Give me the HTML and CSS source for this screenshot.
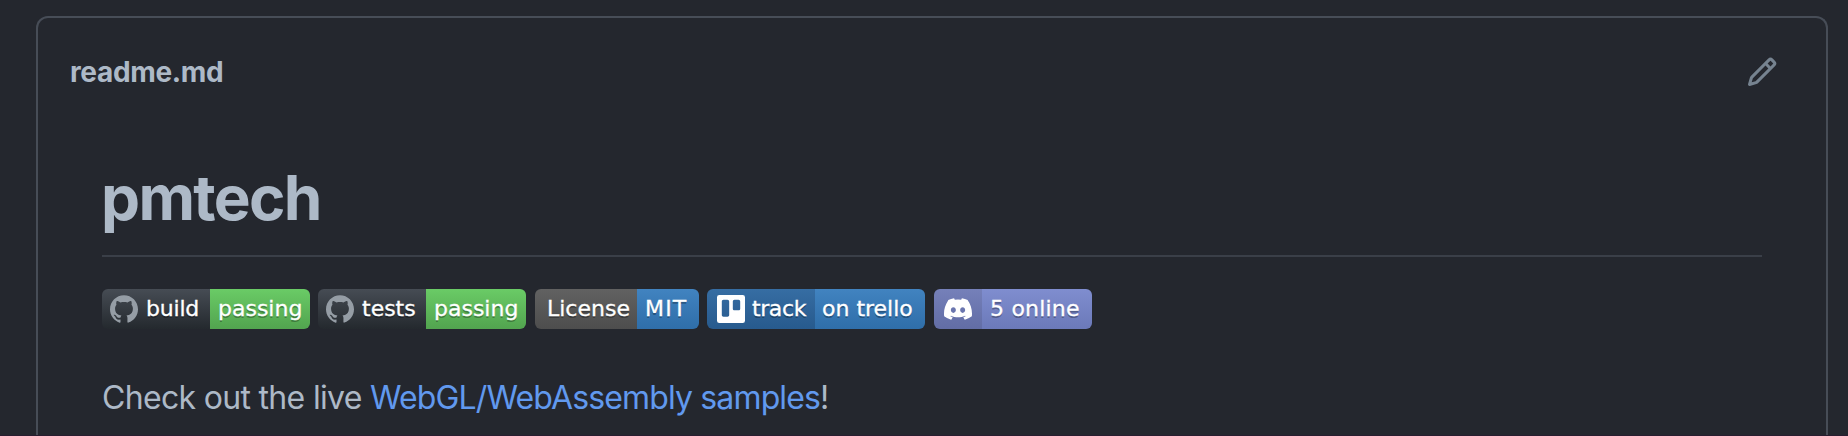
FILE: index.html
```html
<!DOCTYPE html>
<html lang="en">
<head>
<meta charset="utf-8">
<title>pmtech</title>
<link rel="stylesheet" href="styles.css">
</head>
<body>
<svg class="defs" width="0" height="0" aria-hidden="true">
  <symbol id="github" viewBox="0 0 24 24"><path d="M12 .297c-6.63 0-12 5.373-12 12 0 5.303 3.438 9.8 8.205 11.385.6.113.82-.258.82-.577 0-.285-.01-1.04-.015-2.04-3.338.724-4.042-1.61-4.042-1.61C4.422 18.07 3.633 17.7 3.633 17.7c-1.087-.744.084-.729.084-.729 1.205.084 1.838 1.236 1.838 1.236 1.07 1.835 2.809 1.305 3.495.998.108-.776.417-1.305.76-1.605-2.665-.3-5.466-1.332-5.466-5.93 0-1.31.465-2.38 1.235-3.22-.135-.303-.54-1.523.105-3.176 0 0 1.005-.322 3.3 1.23.96-.267 1.98-.399 3-.405 1.02.006 2.04.138 3 .405 2.28-1.552 3.285-1.23 3.285-1.23.645 1.653.24 2.873.12 3.176.765.84 1.23 1.91 1.23 3.22 0 4.61-2.805 5.625-5.475 5.92.42.36.81 1.096.81 2.22 0 1.606-.015 2.896-.015 3.286 0 .315.21.69.825.57C20.565 22.092 24 17.592 24 12.297c0-6.627-5.373-12-12-12"/></symbol>
</svg>
<main class="readme">
  <header class="readme-bar">
    <span class="filename">readme.md</span>
    <svg class="pencil" viewBox="0 0 16 16"><path fill-rule="evenodd" d="M11.013 1.427a1.75 1.75 0 012.474 0l1.086 1.086a1.75 1.75 0 010 2.474l-8.61 8.61c-.21.21-.47.364-.756.445l-3.251.93a.75.75 0 01-.927-.928l.929-3.25a1.75 1.75 0 01.445-.758l8.61-8.61zm1.414 1.06a.25.25 0 00-.354 0L10.811 3.75l1.439 1.44 1.263-1.263a.25.25 0 000-.354l-1.086-1.086zM11.189 6.25L9.75 4.81l-6.286 6.287a.25.25 0 00-.064.108l-.558 1.953 1.953-.558a.249.249 0 00.108-.064l6.286-6.286z"/></svg>
  </header>
  <article class="content">
    <h1>pmtech</h1>
    <div class="badges">
      <span class="badge build"><span class="label"><svg class="icon"><use href="#github"/></svg><b>build</b></span><span class="value"><b>passing</b></span></span>
      <span class="badge tests"><span class="label"><svg class="icon"><use href="#github"/></svg><b>tests</b></span><span class="value"><b>passing</b></span></span>
      <span class="badge license"><span class="label"><b>License</b></span><span class="value"><b>MIT</b></span></span>
      <span class="badge trello"><span class="label"><svg class="icon" viewBox="0 0 24 24"><path fill-rule="evenodd" d="M22 0H2a2 2 0 0 0-2 2v20a2 2 0 0 0 2 2h20a2 2 0 0 0 2-2V2a2 2 0 0 0-2-2zM10.44 17.18c0 .8-.64 1.44-1.44 1.44H5.56c-.8 0-1.44-.64-1.44-1.44V5.56c0-.8.64-1.44 1.44-1.44H9c.8 0 1.44.64 1.44 1.44zm9.44-5.48c0 .8-.64 1.44-1.44 1.44H15c-.8 0-1.44-.64-1.44-1.44V5.56c0-.8.64-1.44 1.44-1.44h3.44c.8 0 1.44.64 1.44 1.44z"/></svg><b>track</b></span><span class="value"><b>on trello</b></span></span>
      <span class="badge discord"><span class="label"><svg class="icon" viewBox="0 0 24 24"><path d="M20.317 4.37a19.791 19.791 0 0 0-4.885-1.515.074.074 0 0 0-.079.037c-.21.375-.444.864-.608 1.25a18.27 18.27 0 0 0-5.487 0 12.64 12.64 0 0 0-.617-1.25.077.077 0 0 0-.079-.037A19.736 19.736 0 0 0 3.677 4.37a.07.07 0 0 0-.032.027C.533 9.046-.32 13.58.099 18.057a.082.082 0 0 0 .031.057 19.9 19.9 0 0 0 5.993 3.03.078.078 0 0 0 .084-.028 14.09 14.09 0 0 0 1.226-1.994.076.076 0 0 0-.041-.106 13.107 13.107 0 0 1-1.872-.892.077.077 0 0 1-.008-.128 10.2 10.2 0 0 0 .372-.292.074.074 0 0 1 .077-.01c3.928 1.793 8.18 1.793 12.062 0a.074.074 0 0 1 .078.01c.12.098.246.198.373.292a.077.077 0 0 1-.006.127 12.299 12.299 0 0 1-1.873.892.077.077 0 0 0-.041.107c.36.698.772 1.362 1.225 1.993a.076.076 0 0 0 .084.028 19.839 19.839 0 0 0 6.002-3.03.077.077 0 0 0 .032-.054c.5-5.177-.838-9.674-3.549-13.66a.061.061 0 0 0-.031-.03zM8.02 15.33c-1.183 0-2.157-1.085-2.157-2.419 0-1.333.956-2.419 2.157-2.419 1.21 0 2.176 1.096 2.157 2.42 0 1.333-.956 2.418-2.157 2.418zm7.975 0c-1.183 0-2.157-1.085-2.157-2.419 0-1.333.955-2.419 2.157-2.419 1.21 0 2.176 1.096 2.157 2.42 0 1.333-.946 2.418-2.157 2.418z"/></svg></span><span class="value"><b>5 online</b></span></span>
    </div>
    <p><span class="lead">Check out the live </span><a>WebGL/WebAssembly samples</a>!</p>
  </article>
</main>
</body>
</html>
```
FILE: styles.css
```css
* { box-sizing: border-box; }
html { height: 100%; overflow: hidden; background: #24272e; }
body {
  margin: 0;
  padding: 16px 20px 0 36px;
  height: 436px;
  overflow: hidden;
  border-bottom: 1px solid #291d30;
  color: #adb9c7;
  font-family: Inter, "Liberation Sans", sans-serif;
}
.defs { display: none; }
.readme {
  height: 419px;
  border: 2px solid #474d57;
  border-bottom: 0;
  border-radius: 12px 12px 0 0;
  padding: 32px 64px 0;
}
.readme-bar {
  display: flex;
  justify-content: space-between;
  align-items: center;
  height: 44px;
  margin: 0 -16px 0 -32px;
}
.filename { font-size: 28px; font-weight: 680; line-height: 42px; letter-spacing: -0.35px; }
.pencil { width: 32px; height: 32px; fill: #768390; }
h1 {
  margin: 63px 0 32px;
  height: 100px;
  border-bottom: 2px solid #3a3f48;
  font-size: 62px;
  font-weight: 650;
  line-height: 81px;
  letter-spacing: -1.7px;
  text-indent: -1px;
}
.badges { display: flex; height: 40px; }
.badge { display: flex; height: 40px; border-radius: 6px; overflow: hidden; }
.label, .value {
  display: flex;
  align-items: center;
  height: 40px;
}
.value { flex: 1; }
.badge b {
  font: 22px/40px "DejaVu Sans", sans-serif;
  color: #fff;
  text-shadow: 0 2px 0 rgba(1, 1, 1, .3);
  -webkit-text-stroke: .3px #fff;
  white-space: nowrap;
}
.icon { width: 28px; height: 28px; margin: 0 8px; fill: #fff; flex: none; }
.build, .tests { width: 208px; margin-right: 8px; }
.tests { margin-right: 9px; }
.build .label, .tests .label { width: 108px; background: linear-gradient(#464c54, #24292e); }
.build .label b { letter-spacing: -.2px; }
.build .icon, .tests .icon { fill: #959da5; }
.build .value, .tests .value { background: linear-gradient(#6acb66, #52a44f); padding-left: 8px; }
.license { width: 164px; margin-right: 8px; }
.license .label { width: 102px; padding-left: 12px; background: linear-gradient(#616161, #4d4d4d); }
.license .value { padding-left: 8px; background: linear-gradient(#4183c0, #2f6ea9); }
.license .value b { letter-spacing: 1.2px; }
.trello { width: 218px; margin-right: 9px; }
.trello .label { width: 108px; padding-left: 2px; background: linear-gradient(#366da3, #275a8d); }
.trello .icon { margin-right: 7px; }
.trello .label b { letter-spacing: -.4px; }
.trello .value { padding-left: 7px; background: linear-gradient(#4183c0, #2f6ea9); }
.discord { width: 158px; }
.discord .label { width: 48px; padding-left: 2px; background: linear-gradient(#7580b9, #626da5); }
.discord .value { padding-left: 8px; background: linear-gradient(#7f8dcf, #6b79b9); }
.discord .value b { letter-spacing: .2px; }
p {
  margin: 45px 0 0;
  font-size: 32px;
  font-weight: 430;
  line-height: 48px;
  letter-spacing: -.86px;
  white-space: nowrap;
}
.lead { letter-spacing: -.68px; }
a { color: #6199ee; }
```
